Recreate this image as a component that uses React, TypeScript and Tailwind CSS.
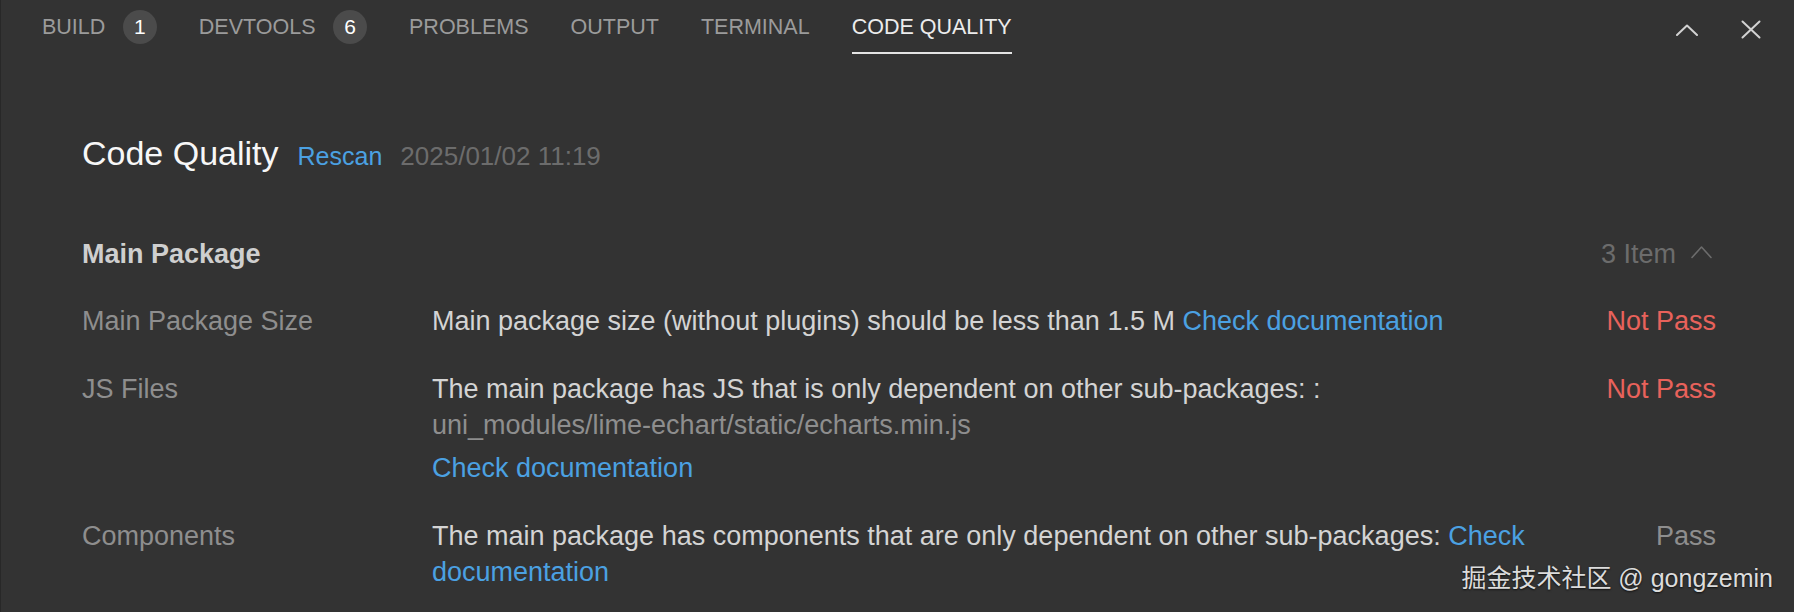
import React from "react";

const tabs: { label: string; badge?: string; active?: boolean }[] = [
  { label: "BUILD", badge: "1" },
  { label: "DEVTOOLS", badge: "6" },
  { label: "PROBLEMS" },
  { label: "OUTPUT" },
  { label: "TERMINAL" },
  { label: "CODE QUALITY", active: true },
];

function ChevronUp({ className }: { className?: string }) {
  return (
    <svg width="22" height="12" viewBox="0 0 22 12" className={className} fill="none">
      <polyline points="1,11 11,1.5 21,11" stroke="currentColor" strokeWidth="2" strokeLinecap="round" strokeLinejoin="round" />
    </svg>
  );
}

function CloseX() {
  return (
    <svg width="20" height="19" viewBox="0 0 20 19" fill="none" className="text-[#d2d2d2]">
      <line x1="1.5" y1="1.5" x2="18.5" y2="17.5" stroke="currentColor" strokeWidth="2" strokeLinecap="round" />
      <line x1="18.5" y1="1.5" x2="1.5" y2="17.5" stroke="currentColor" strokeWidth="2" strokeLinecap="round" />
    </svg>
  );
}

export default function App() {
  return (
    <div
      className="relative w-[1794px] h-[612px] overflow-hidden bg-[#333333] border-l border-[#282828]"
      style={{ fontFamily: '"Liberation Sans", Arial, "Noto Sans CJK SC", sans-serif' }}
    >
      {/* Tab bar */}
      <div className="flex h-[54px] items-stretch pl-[41px] pr-[33px]">
        <div className="flex items-stretch gap-[42px]">
          {tabs.map((t) => (
            <div key={t.label} className="flex items-center">
              <div
                className={
                  t.active
                    ? "flex h-full items-center border-b-2 border-[#e4e4e4] pt-[2px] text-[21.5px] text-[#ececec]"
                    : "flex h-full items-center border-b-2 border-transparent pt-[2px] text-[21.5px] text-[#9b9b9b]"
                }
              >
                {t.label}
              </div>
              {t.badge && (
                <div className="ml-[17.5px] flex h-[34px] w-[34px] items-center justify-center rounded-full bg-[#4b4b4b] text-[21px] text-white">
                  {t.badge}
                </div>
              )}
            </div>
          ))}
        </div>
        <div className="ml-auto flex items-center gap-[43px] pt-[5px]">
          <ChevronUp className="text-[#d2d2d2]" />
          <CloseX />
        </div>
      </div>

      {/* Content */}
      <div className="pl-[81px] pr-[78px] pt-[78.5px]">
        <div className="flex h-[40px] items-baseline leading-[40px]">
          <span className="text-[34px] text-[#f7f7f7]">Code Quality</span>
          <span className="ml-[19px] text-[25px] text-[#4ba1e2]">Rescan</span>
          <span className="ml-[18px] text-[26px] text-[#6c6c6c]">2025/01/02 11:19</span>
        </div>

        <div className="mt-[63px] flex h-[36px] items-center leading-[36px]">
          <span className="text-[27px] font-bold text-[#cfcfcf]">Main Package</span>
          <div className="ml-auto flex items-center">
            <span className="text-[27px] text-[#6c6c6c]">3 Item</span>
            <svg width="21" height="14" viewBox="0 0 21 14" fill="none" className="ml-[15px] mr-[4px] mt-[-4px] text-[#6c6c6c]">
              <polyline points="1,12.5 10.5,2 20,12.5" stroke="currentColor" strokeWidth="1.6" strokeLinecap="round" strokeLinejoin="round" />
            </svg>
          </div>
        </div>

        <div className="mt-[31px] flex flex-col gap-[32px] text-[27px] leading-[36px]">
          <div className="grid grid-cols-[350px_1fr_134px]">
            <div className="text-[#8e8e8e]">Main Package Size</div>
            <div className="text-[#d4d4d4]">
              Main package size (without plugins) should be less than 1.5 M{" "}
              <span className="text-[#4ba1e2]">Check documentation</span>
            </div>
            <div className="text-right text-[#e8625b]">Not Pass</div>
          </div>

          <div className="grid grid-cols-[350px_1fr_134px]">
            <div className="text-[#8e8e8e]">JS Files</div>
            <div>
              <div className="text-[#d4d4d4]">
                The main package has JS that is only dependent on other sub-packages: :
              </div>
              <div className="text-[#8e8e8e]">uni_modules/lime-echart/static/echarts.min.js</div>
              <div className="mt-[7px] text-[#4ba1e2]">Check documentation</div>
            </div>
            <div className="text-right text-[#e8625b]">Not Pass</div>
          </div>

          <div className="grid grid-cols-[350px_1fr_134px]">
            <div className="text-[#8e8e8e]">Components</div>
            <div className="flex flex-col">
              <div className="text-[#d4d4d4]">
                The main package has components that are only dependent on other sub-packages:{" "}
                <span className="text-[#4ba1e2]">Check</span>
              </div>
              <div className="text-[#4ba1e2]">documentation</div>
            </div>
            <div className="text-right text-[#8e8e8e]">Pass</div>
          </div>
        </div>
      </div>

      {/* Watermark */}
      <div
        className="absolute bottom-[19px] right-[21px] text-[25px] leading-[30px] text-[#dcdcdc] [text-shadow:0_1px_2px_rgba(0,0,0,0.7)]"
        style={{ fontFamily: '"Liberation Sans", "Noto Sans CJK SC", sans-serif' }}
      >
        掘金技术社区 @ gongzemin
      </div>
    </div>
  );
}
